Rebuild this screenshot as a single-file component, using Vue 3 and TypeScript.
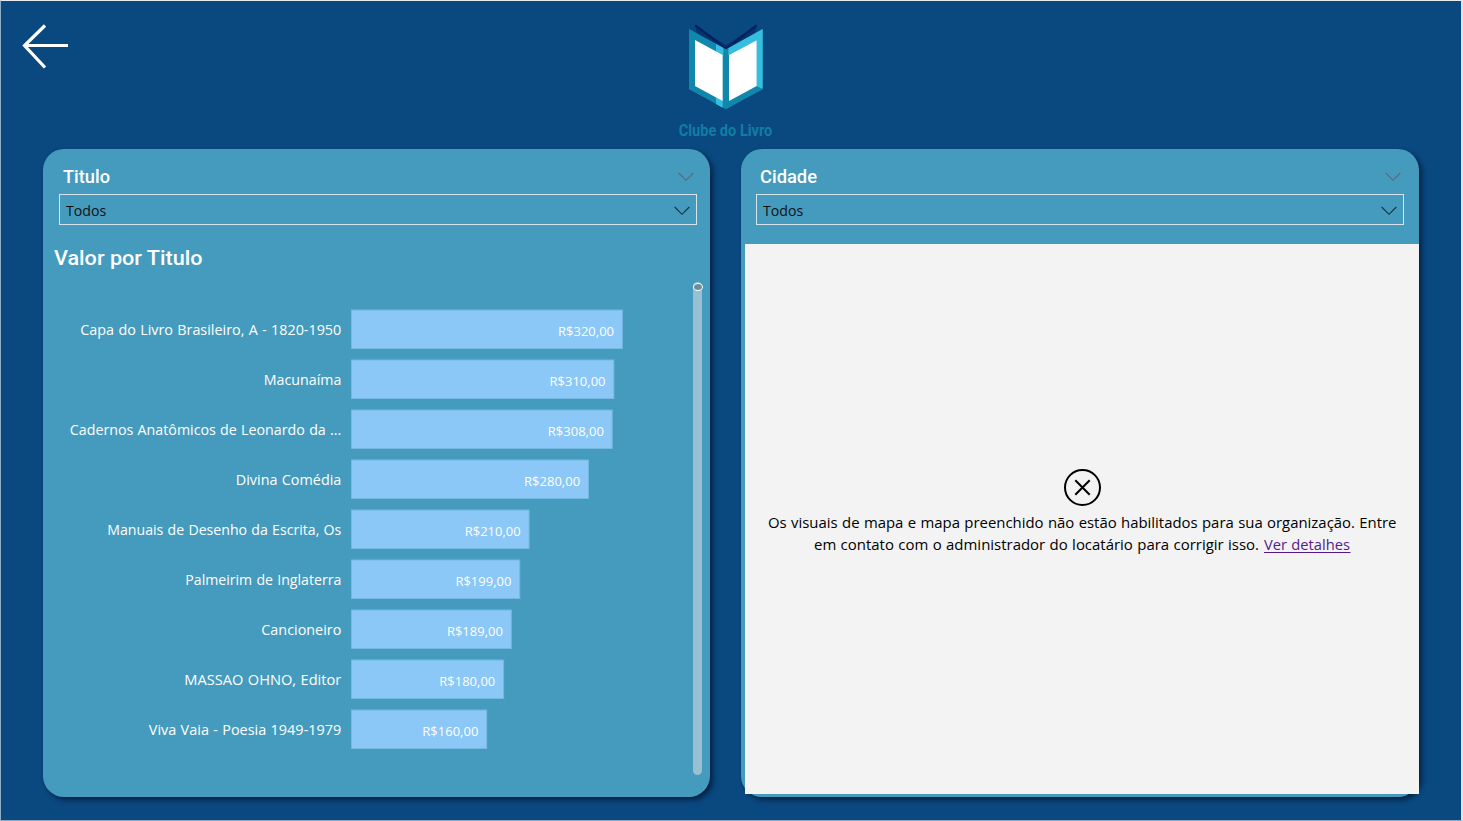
<script setup lang="ts">
interface Book {
  title: string
  value: number
  labelWidth: number
}

const books: Book[] = [
  { title: 'Capa do Livro Brasileiro, A - 1820-1950', value: 320, labelWidth: 261 },
  { title: 'Macunaíma', value: 310, labelWidth: 77.5 },
  { title: 'Cadernos Anatômicos de Leonardo da ...', value: 308, labelWidth: 271.5 },
  { title: 'Divina Comédia', value: 280, labelWidth: 105.5 },
  { title: 'Manuais de Desenho da Escrita, Os', value: 210, labelWidth: 234 },
  { title: 'Palmeirim de Inglaterra', value: 199, labelWidth: 156 },
  { title: 'Cancioneiro', value: 189, labelWidth: 80 },
  { title: 'MASSAO OHNO, Editor', value: 180, labelWidth: 157 },
  { title: 'Viva Vaia - Poesia 1949-1979', value: 160, labelWidth: 192.5 },
]

const barWidth = (value: number): number => value * 0.848
const price = (value: number): string => `R$${value},00`
</script>

<template>
  <div class="report">
    <header class="top">
      <svg class="back" width="46" height="46" viewBox="0 0 46 46">
        <path d="M23 2.5 L2.5 22.5 L23 44.5 M2.5 22.5 H46" fill="none" stroke="#fff" stroke-width="3.2" />
      </svg>
      <svg class="logo" width="130" height="140" viewBox="0 0 390 420">
        <path d="M104 44 L198 106 L198 122 L112 72Z" fill="#06336c" />
        <path d="M292 44 L198 106 L198 122 L284 72Z" fill="#06336c" />
        <path d="M106 46 L198 116 L290 46" fill="none" stroke="#05205f" stroke-width="6" />
        <path d="M87 57 L198 118 V298 L87 238Z" fill="#1287ac" />
        <path d="M308 57 L198 118 V298 L308 238Z" fill="#1287ac" />
        <path d="M308 57 L205 115 V136 L290 91 V229 L308 236Z" fill="#35bedf" />
        <path d="M168 102 L190 114 V138 L168 126Z M168 260 L188 272 V293 L168 282Z" fill="#35bedf" />
        <path d="M105 90 L188 135 V273 L105 228Z M207 135 L290 91 V228 L207 273Z" fill="#fff" />
        <text class="brand" x="56" y="378" textLength="281" lengthAdjust="spacingAndGlyphs">Clube do Livro</text>
      </svg>
    </header>

    <main class="panels">
      <section class="panel left">
        <div class="filter">
          <div class="filter-head">
            <svg class="title" width="200" height="26"><text x="0" y="19" textLength="47" lengthAdjust="spacingAndGlyphs">Titulo</text></svg>
            <svg class="chev soft" width="16" height="10" viewBox="0 0 16 10"><path d="M.7 1 L8 8.3 L15.3 1" /></svg>
          </div>
          <div class="select">
            <span>Todos</span>
            <svg class="chev" width="16" height="10" viewBox="0 0 16 10"><path d="M.7 1 L8 8.3 L15.3 1" /></svg>
          </div>
        </div>
        <svg class="chart-title" width="300" height="30"><text x="0" y="21" textLength="148.5" lengthAdjust="spacingAndGlyphs">Valor por Titulo</text></svg>
        <div class="chart">
          <svg class="bars" width="640" height="495" viewBox="0 0 640 495">
            <g v-for="(book, i) in books" :key="book.title" :transform="`translate(0 ${i * 50})`">
              <text class="label" x="287.3" y="53" text-anchor="end" :textLength="book.labelWidth" lengthAdjust="spacingAndGlyphs">{{ book.title }}</text>
              <rect x="297.5" y="28" :width="barWidth(book.value) - 0.5" height="38.5" fill="#8bc7f7" stroke="#74b8e4" stroke-width="1" />
              <text class="value" :x="560 - (320 - book.value) * 0.848" y="54" text-anchor="end" textLength="56" lengthAdjust="spacingAndGlyphs">{{ price(book.value) }}</text>
            </g>
          </svg>
          <div class="track"><div class="thumb"></div></div>
        </div>
      </section>

      <section class="panel right">
        <div class="filter">
          <div class="filter-head">
            <svg class="title" width="200" height="26"><text x="0" y="19" textLength="57" lengthAdjust="spacingAndGlyphs">Cidade</text></svg>
            <svg class="chev soft" width="16" height="10" viewBox="0 0 16 10"><path d="M.7 1 L8 8.3 L15.3 1" /></svg>
          </div>
          <div class="select">
            <span>Todos</span>
            <svg class="chev" width="16" height="10" viewBox="0 0 16 10"><path d="M.7 1 L8 8.3 L15.3 1" /></svg>
          </div>
        </div>
        <div class="map-error">
          <svg width="38" height="38" viewBox="0 0 38 38" fill="none" stroke="#000" stroke-width="2">
            <circle cx="19.5" cy="18.5" r="17.5" />
            <path d="M12.3 11.3 L26.7 25.7 M26.7 11.3 L12.3 25.7" />
          </svg>
          <svg class="message" width="670" height="46">
            <text x="21" y="17" textLength="628.5" lengthAdjust="spacingAndGlyphs">Os visuais de mapa e mapa preenchido não estão habilitados para sua organização. Entre</text>
            <text x="67" y="39" textLength="445" lengthAdjust="spacingAndGlyphs">em contato com o administrador do locatário para corrigir isso.</text>
            <text class="link" x="517" y="39" textLength="86" lengthAdjust="spacingAndGlyphs">Ver detalhes</text>
            <path d="M517 41.5 H603.5" stroke="#551a8b" />
          </svg>
        </div>
      </section>
    </main>
  </div>
</template>

<style>
body {
  margin: 0;
  overflow: hidden;
}
</style>

<style scoped>
.report {
  box-sizing: border-box;
  width: 1463px;
  height: 821px;
  border-style: solid;
  border-color: #e6eaee #e4e6ea #8fa9c4 #8fadc6;
  border-width: 1px 2px 1px 1px;
  background: #0a4880;
  font-family: "Open Sans", "Noto Sans", sans-serif;
}
.top {
  display: flex;
  height: 148px;
}
.back {
  margin: 22px 0 0 21px;
}
.logo {
  margin: 9px 0 0 592px;
}
.brand {
  font: 700 51px Roboto, sans-serif;
  fill: #127da4;
}
.panels {
  display: flex;
  gap: 31px;
  padding-left: 42.4px;
}
.panel {
  box-sizing: border-box;
  height: 647.5px;
  border-radius: 21px;
  background: #449bbd;
  box-shadow: 3px 3px 5px rgba(0, 15, 35, 0.65);
}
.left {
  width: 667px;
  padding-left: 10.6px;
}
.right {
  width: 678px;
  padding-left: 3.6px;
}
.filter {
  height: 95px;
}
.left .filter {
  margin-left: 5px;
  width: 638px;
}
.right .filter {
  margin-left: 11px;
  width: 648px;
}
.filter-head {
  display: flex;
  justify-content: space-between;
  height: 37px;
  padding: 15px 3px 0 4px;
  box-sizing: border-box;
  margin-bottom: 8px;
}
.filter-head .chev {
  margin-top: 8px;
}
.title text,
.chart-title text {
  font-family: Roboto, sans-serif;
  font-weight: 500;
  fill: #fff;
}
.title text {
  font-size: 19px;
}
.chart-title text {
  font-size: 20.5px;
}
.chart-title {
  display: block;
}
.chev {
  fill: none;
  stroke: #17323d;
  stroke-width: 1.1;
}
.soft {
  stroke: #5c6a72;
}
.select {
  box-sizing: border-box;
  display: flex;
  align-items: center;
  justify-content: space-between;
  height: 31px;
  padding: 3px 6px 1px;
  border: 1px solid #d5e5eb;
  color: #111;
  font-size: 14.2px;
}
.chart {
  display: flex;
  height: 495px;
  margin-top: 8px;
}
.label {
  font-size: 14.5px;
  word-spacing: 0.6px;
  fill: #fff;
}
.value {
  font-size: 13.2px;
  fill: #fff;
}
.track {
  width: 9px;
  height: 493px;
  margin-left: -1px;
  border-radius: 5px;
  background: #98c0d0;
}
.thumb {
  box-sizing: border-box;
  width: 10px;
  height: 8px;
  margin-top: 1px;
  border: 1px solid #fff;
  border-radius: 50%;
  background: #6f8e9c;
}
.map-error {
  box-sizing: border-box;
  width: 674px;
  height: 550px;
  padding-top: 225px;
  background: #f3f3f3;
  display: flex;
  flex-direction: column;
  align-items: center;
}
.message {
  margin-top: 4px;
  font-size: 15px;
  word-spacing: 0.5px;
}
.message .link {
  fill: #551a8b;
}
</style>
